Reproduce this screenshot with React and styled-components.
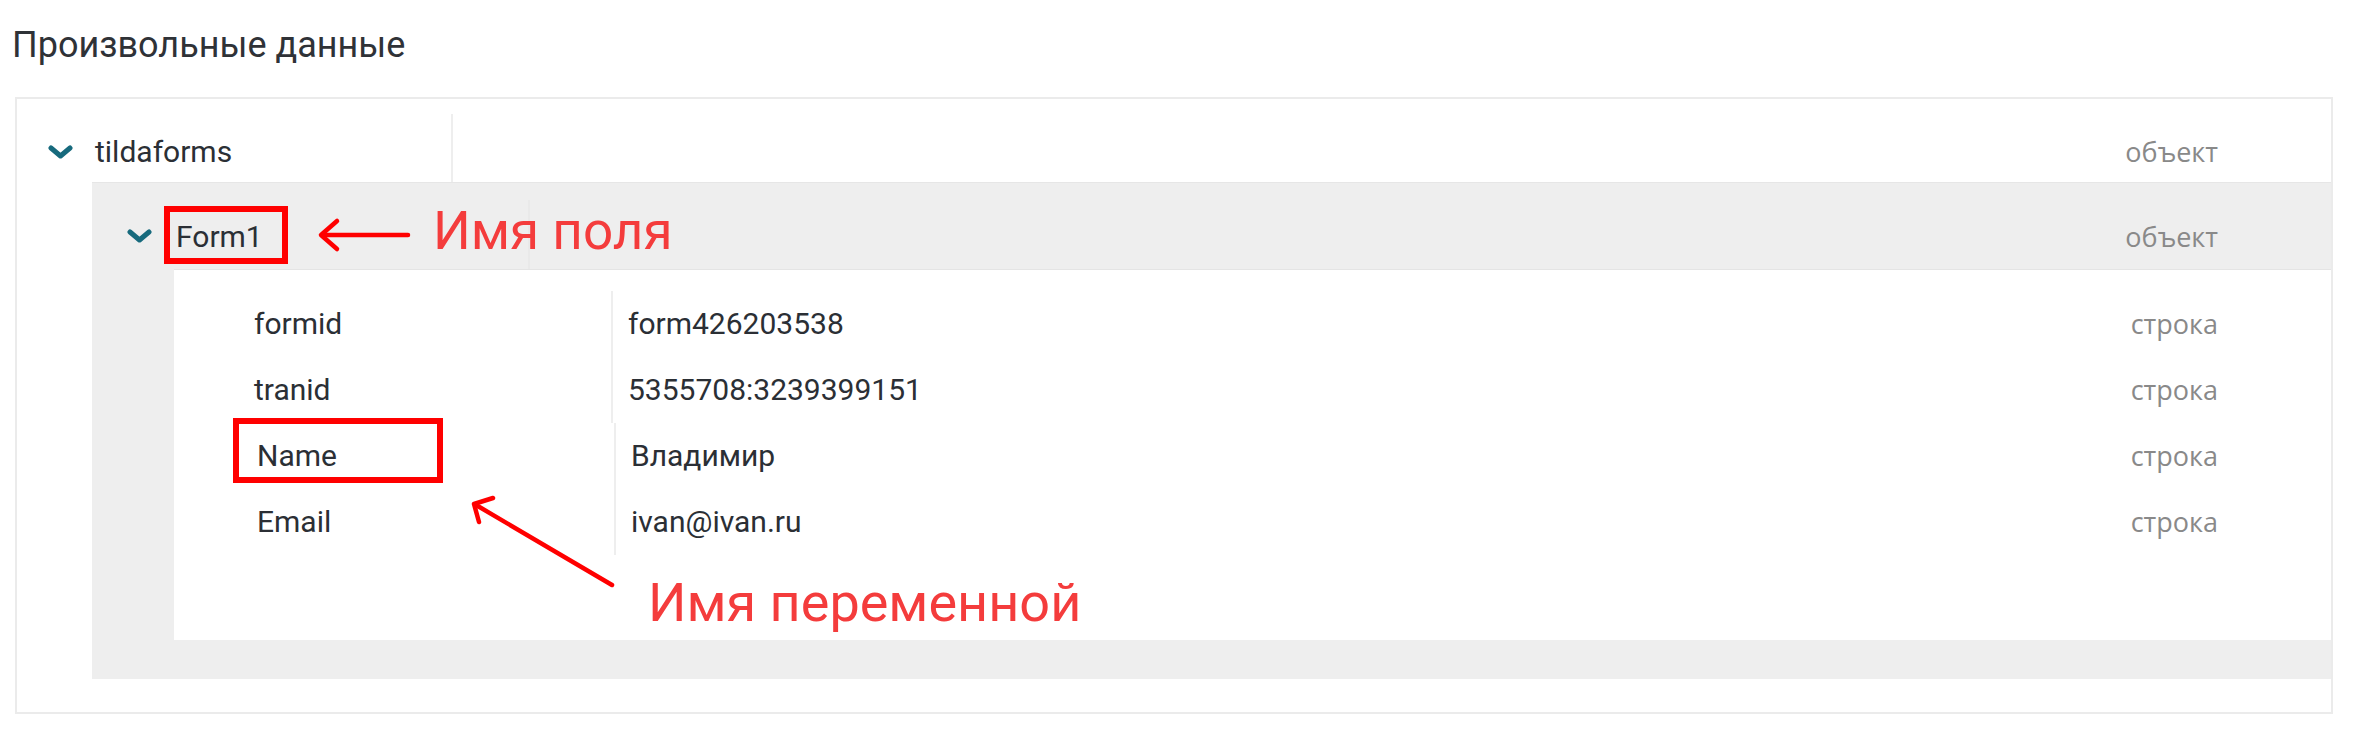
import React from "react";
import styled, { createGlobalStyle } from "styled-components";

const Global = createGlobalStyle`
  html, body { margin: 0; padding: 0; background: #ffffff; }
  body { font-family: Roboto, "Liberation Sans", sans-serif; }
`;

const Page = styled.div`
  position: relative;
  width: 2362px;
  height: 742px;
  overflow: hidden;
  background: #ffffff;
`;

const Title = styled.h2`
  margin: 0;
  padding: 22px 0 0 12px;
  font-family: Roboto, "Liberation Sans", sans-serif;
  font-weight: 400;
  font-size: 36px;
  line-height: 46px;
  color: #2f3237;
`;

const Panel = styled.div`
  box-sizing: border-box;
  margin: 29px 0 0 15px;
  width: 2318px;
  border: 2px solid #ebebeb;
  padding-bottom: 33px;
  background: #ffffff;
`;

const Row = styled.div`
  display: flex;
  box-sizing: border-box;
  height: ${(p) => p.$h}px;
  padding-top: ${(p) => p.$pt}px;
`;

const KeyCell = styled.div`
  box-sizing: border-box;
  display: flex;
  align-items: center;
  gap: ${(p) => p.$gap || 0}px;
  flex: 0 0 ${(p) => p.$w}px;
  padding-top: ${(p) => p.$pt || 0}px;
  padding-left: ${(p) => p.$pl || 0}px;
  height: 100%;
  border-right: 2px solid ${(p) => p.$line || "#eeeeee"};
`;

const Label = styled.span`
  font-family: Roboto, "Liberation Sans", sans-serif;
  font-size: 30px;
  line-height: ${(p) => p.$lh}px;
  color: #2b2f35;
  white-space: nowrap;
`;

const ValueCell = styled.div`
  flex: 1 1 auto;
  box-sizing: border-box;
  padding-left: ${(p) => p.$pl}px;
  font-family: Roboto, "Liberation Sans", sans-serif;
  font-size: 30px;
  line-height: ${(p) => p.$lh}px;
  color: #2b2f35;
  white-space: nowrap;
`;

const TypeCell = styled.div`
  flex: 0 0 auto;
  box-sizing: border-box;
  margin-left: auto;
  padding-top: ${(p) => p.$pt || 0}px;
  padding-right: ${(p) => p.$pr}px;
  font-family: "Open Sans", "Noto Sans", sans-serif;
  font-size: 27px;
  line-height: ${(p) => p.$lh}px;
  color: #898989;
  text-align: right;
  white-space: nowrap;
`;

const GrayBlock = styled.div`
  margin-left: 75px;
  background: #eeeeee;
  border-top: 1px solid #e6e6e6;
  padding-bottom: 39px;
`;

const WhiteBlock = styled.div`
  margin-left: 82px;
  background: #ffffff;
  border-top: 1px solid #e4e4e4;
  padding: 21px 0 85px 0;
`;

const ChevronIcon = () => (
  <svg width="25" height="15" viewBox="0 0 25 15" style={{ flex: "0 0 auto" }}>
    <polyline
      points="3,3 12.5,11 22,3"
      fill="none"
      stroke="#176a7d"
      strokeWidth="5"
      strokeLinecap="round"
      strokeLinejoin="round"
    />
  </svg>
);

const Frame = styled.div`
  position: absolute;
  box-sizing: border-box;
  left: ${(p) => p.$x}px;
  top: ${(p) => p.$y}px;
  width: ${(p) => p.$w}px;
  height: ${(p) => p.$h}px;
  border: 6px solid #ff0000;
  pointer-events: none;
`;

const Note = styled.span`
  position: absolute;
  left: ${(p) => p.$x}px;
  top: ${(p) => p.$y}px;
  font-family: Roboto, "Liberation Sans", sans-serif;
  font-size: ${(p) => p.$size}px;
  line-height: 1;
  color: #f43c3c;
  white-space: nowrap;
`;

const Arrows = styled.svg`
  position: absolute;
  left: 0;
  top: 0;
  pointer-events: none;
`;

const fields = [
  { key: "formid", value: "form426203538", shift: 0 },
  { key: "tranid", value: "5355708:3239399151", shift: 0 },
  { key: "Name", value: "Владимир", shift: 3 },
  { key: "Email", value: "ivan@ivan.ru", shift: 3 },
];

export default function App() {
  return (
    <Page>
      <Global />
      <Title>Произвольные данные</Title>
      <Panel>
        <Row $h={83} $pt={15}>
          <KeyCell $w={436} $pl={31} $gap={22} $pt={8}>
            <ChevronIcon />
            <Label $lh={60}>tildaforms</Label>
          </KeyCell>
          <TypeCell $pr={113} $pt={8} $lh={60}>
            объект
          </TypeCell>
        </Row>
        <GrayBlock>
          <Row $h={86} $pt={17}>
            <KeyCell $w={438} $pl={35} $gap={24} $pt={4} $line="#e9e9e9">
              <ChevronIcon />
              <Label $lh={66}>Form1</Label>
            </KeyCell>
            <TypeCell $pr={113} $pt={4} $lh={66}>
              объект
            </TypeCell>
          </Row>
          <WhiteBlock>
            {fields.map((f) => (
              <Row key={f.key} $h={66} $pt={0}>
                <KeyCell $w={439 + f.shift} $pl={80 + f.shift}>
                  <Label $lh={66}>{f.key}</Label>
                </KeyCell>
                <ValueCell $pl={15} $lh={66}>
                  {f.value}
                </ValueCell>
                <TypeCell $pr={113} $lh={66}>
                  строка
                </TypeCell>
              </Row>
            ))}
          </WhiteBlock>
        </GrayBlock>
      </Panel>

      <Frame $x={164} $y={206} $w={124} $h={58} />
      <Frame $x={233} $y={418} $w={210} $h={65} />
      <Note $x={433} $y={205} $size={53}>Имя поля</Note>
      <Note $x={648} $y={576} $size={54}>Имя переменной</Note>
      <Arrows width="2362" height="742" viewBox="0 0 2362 742">
        <g fill="none" stroke="#ff0000" strokeWidth="4.5" strokeLinecap="round" strokeLinejoin="round">
          <line x1="408" y1="235" x2="322" y2="235" />
          <polyline points="337,221 321,235 337,249" />
          <line x1="612" y1="585" x2="476" y2="505" />
          <polyline points="493,498 474,504 479,522" />
        </g>
      </Arrows>
    </Page>
  );
}
